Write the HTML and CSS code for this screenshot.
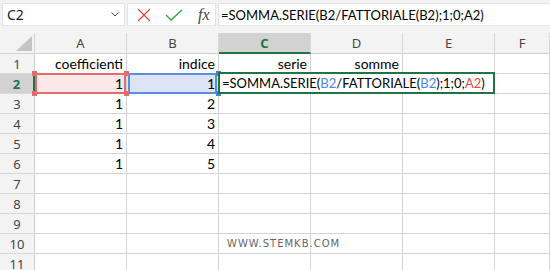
FILE: index.html
```html
<!DOCTYPE html>
<html lang="it">
<head>
  <meta charset="UTF-8" />
  <title>Excel - SOMMA.SERIE</title>
  <link rel="stylesheet" href="styles.css">
</head>
<body>
  <div class="topbar">
    <div class="namebox">
      <span>C2</span>
      <svg class="chevron" width="8" height="5" viewBox="0 0 8 5"><path d="M0.5 0.5 L4 4 L7.5 0.5" fill="none" stroke="#444" stroke-width="1"/></svg>
    </div>
    <div class="fbuttons">
      <svg width="14" height="14" viewBox="0 0 14 14"><path d="M1 1 L13 13 M13 1 L1 13" stroke="#e8413b" stroke-width="1.2" fill="none"/></svg>
      <svg width="18" height="12" viewBox="0 0 18 12"><path d="M1 6 L6 11 L17 1" stroke="#2e9e3e" stroke-width="1.3" fill="none"/></svg>
      <span class="fx">fx</span>
    </div>
    <div class="formula">=SOMMA.SERIE(B2/FATTORIALE(B2);1;0;A2)</div>
  </div>

  <div class="sheet">
    <div class="corner"><svg width="16" height="15" viewBox="0 0 16 15"><path d="M16 0 L16 15 L0 15 Z" fill="#c4c4c4"/></svg></div>
    <div class="ch">A</div>
    <div class="ch">B</div>
    <div class="ch active">C</div>
    <div class="ch">D</div>
    <div class="ch">E</div>
    <div class="ch">F</div>

    <div class="rh">1</div>
    <div class="cell">coefficienti</div>
    <div class="cell">indice</div>
    <div class="cell">serie</div>
    <div class="cell">somme</div>
    <div class="cell"></div>
    <div class="cell"></div>

    <div class="rh active">2</div>
    <div class="cell ref-a">1<i class="h tl"></i><i class="h tr"></i><i class="h bl"></i><i class="h br"></i></div>
    <div class="cell ref-b">1<i class="h tl"></i><i class="h tr"></i><i class="h bl"></i><i class="h br"></i></div>
    <div class="cell edit">
      <div class="editor">=SOMMA.SERIE(<span class="blue">B2</span>/FATTORIALE(<span class="blue">B2</span>);1;0;<span class="red">A2</span>)</div>
    </div>
    <div class="cell"></div>
    <div class="cell"></div>
    <div class="cell"></div>

    <div class="rh">3</div>
    <div class="cell">1</div>
    <div class="cell">2</div>
    <div class="cell"></div><div class="cell"></div><div class="cell"></div><div class="cell"></div>

    <div class="rh">4</div>
    <div class="cell">1</div>
    <div class="cell">3</div>
    <div class="cell"></div><div class="cell"></div><div class="cell"></div><div class="cell"></div>

    <div class="rh">5</div>
    <div class="cell">1</div>
    <div class="cell">4</div>
    <div class="cell"></div><div class="cell"></div><div class="cell"></div><div class="cell"></div>

    <div class="rh">6</div>
    <div class="cell">1</div>
    <div class="cell">5</div>
    <div class="cell"></div><div class="cell"></div><div class="cell"></div><div class="cell"></div>

    <div class="rh">7</div>
    <div class="cell"></div><div class="cell"></div><div class="cell"></div><div class="cell"></div><div class="cell"></div><div class="cell"></div>

    <div class="rh">8</div>
    <div class="cell"></div><div class="cell"></div><div class="cell"></div><div class="cell"></div><div class="cell"></div><div class="cell"></div>

    <div class="rh">9</div>
    <div class="cell"></div><div class="cell"></div><div class="cell"></div><div class="cell"></div><div class="cell"></div><div class="cell"></div>

    <div class="rh">10</div>
    <div class="cell"></div><div class="cell"></div>
    <div class="cell watermark">WWW.STEMKB.COM</div>
    <div class="cell"></div><div class="cell"></div><div class="cell"></div>

    <div class="rh">11</div>
    <div class="cell"></div><div class="cell"></div><div class="cell"></div><div class="cell"></div><div class="cell"></div><div class="cell"></div>
  </div>
</body>
</html>
```

FILE: styles.css
```css
:root {
  --grid: #d4d4d4;
  --head-bg: #f3f3f3;
  --head-line: #d8d8d8;
  --green: #217346;
  --red: #e46c6c;
  --blue: #5b8ee0;
}

body {
  margin: 0;
  width: 550px;
  height: 270px;
  overflow: hidden;
  background: #fff;
  font-family: Lato, "Liberation Sans", sans-serif;
  color: #000;
}

.topbar {
  height: 33px;
  box-sizing: border-box;
  background: var(--head-bg);
  display: flex;
  gap: 2px;
  padding: 3px 0 0 2px;
  align-items: flex-start;
}

.namebox,
.fbuttons,
.formula {
  height: 23px;
  box-sizing: border-box;
  background: #fff;
  border: 1px solid #e3e3e3;
  display: flex;
  align-items: center;
}

.namebox {
  width: 123px;
  justify-content: space-between;
  padding: 0 5px 0 4px;
  font-family: "Noto Sans", sans-serif;
  font-size: 14px;
  color: #222;
}

.fbuttons {
  width: 89px;
  padding-left: 9px;
  gap: 14px;
}

.fx {
  font-family: "Liberation Serif", serif;
  font-style: italic;
  font-size: 16px;
  color: #444;
  margin-left: 1px;
}

.formula {
  flex: 1;
  padding-left: 2px;
  font-size: 13px;
  border-right: none;
}

.sheet {
  display: grid;
  grid-template-columns: 35px repeat(5, 92px) 1fr;
  grid-template-rows: 21px;
  grid-auto-rows: 20px;
}

.sheet > div {
  box-sizing: border-box;
  border-right: 1px solid var(--grid);
  border-bottom: 1px solid var(--grid);
  position: relative;
}

.corner {
  background: var(--head-bg);
  display: flex;
  align-items: flex-end;
  justify-content: flex-end;
  padding: 0 2px 2px 0;
}

.ch,
.rh {
  background: var(--head-bg);
  font-family: "Noto Sans", sans-serif;
  font-size: 13px;
  color: #444;
  display: flex;
  align-items: center;
  justify-content: center;
}

.sheet > .ch {
  border-right-color: var(--head-line);
  border-bottom-color: #cfcfcf;
}

.sheet > .rh {
  border-right-color: #cfcfcf;
  border-bottom-color: var(--head-line);
}

.ch.active,
.rh.active {
  background: #d2d2d2;
  color: var(--green);
  font-weight: bold;
}

.sheet > .ch.active {
  border-bottom: 2px solid var(--green);
}

.sheet > .rh.active {
  border-right: 2px solid var(--green);
}

.cell {
  font-size: 14px;
  line-height: 20px;
  text-align: right;
  padding-right: 3px;
  white-space: nowrap;
}

.ref-a { background: #fbe8e8; }
.ref-b { background: #dbe5f6; }

.ref-a::before,
.ref-b::before {
  content: "";
  position: absolute;
  top: -1px;
  left: 0;
  right: 0;
  bottom: -1px;
  border: 2px solid var(--red);
  pointer-events: none;
}

.ref-b::before { border-color: var(--blue); left: 1px; right: 1px; }

.h {
  position: absolute;
  width: 5px;
  height: 5px;
  background: var(--red);
  z-index: 2;
}

.ref-b .h { background: #4a7fd6; }

.h.tl { top: -3px; left: -3px; }
.h.tr { top: -3px; right: -3px; }
.h.bl { bottom: -3px; left: -3px; }
.h.br { bottom: -3px; right: -3px; }

.ref-b .h.tl, .ref-b .h.bl { display: none; }

.edit { z-index: 3; }

.editor {
  position: absolute;
  top: -2px;
  left: -1px;
  width: 277px;
  height: 22px;
  box-sizing: border-box;
  border: 2px solid var(--green);
  background: #fff;
  text-align: left;
  padding-left: 2px;
  line-height: 18px;
  font-size: 13px;
}

.blue { color: #4f86e8; }
.red { color: #e8494b; }

.cell.watermark {
  overflow: visible;
  text-align: left;
  padding-left: 8px;
  font-family: "DejaVu Sans", sans-serif;
  font-size: 10px;
  letter-spacing: 1px;
  color: #666;
}
```
